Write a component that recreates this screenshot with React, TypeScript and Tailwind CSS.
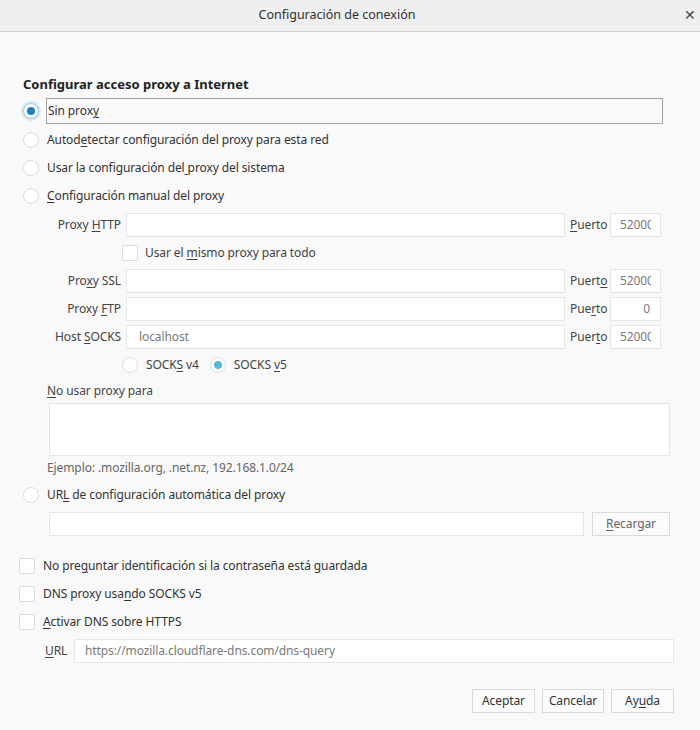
import type { ReactNode } from "react";

const font = { fontFamily: '"Noto Sans", "Open Sans", sans-serif' };

function Key({ text, at }: { text: string; at: number }) {
  if (at < 0) return <>{text}</>;
  return (
    <>
      {text.slice(0, at)}
      <span className="underline decoration-1 underline-offset-2">{text[at]}</span>
      {text.slice(at + 1)}
    </>
  );
}

function Radio({ checked = false, dim = false }: { checked?: boolean; dim?: boolean }) {
  return (
    <span
      className={`flex h-4 w-4 shrink-0 items-center justify-center rounded-full border bg-white ${
        checked && !dim ? "border-[#9cc9e8] shadow-[0_0_0_2px_#d7eaf7]" : "border-[#dedede]"
      }`}
    >
      {checked ? (
        <span className={`h-2 w-2 rounded-full ${dim ? "bg-[#5ab8dd]" : "bg-[#1a7fc1]"}`} />
      ) : null}
    </span>
  );
}

function Check() {
  return <span className="h-4 w-4 shrink-0 rounded-[2px] border border-[#dcdcdc] bg-white" />;
}

function Field({ className = "", children }: { className?: string; children?: ReactNode }) {
  return (
    <div
      className={`flex h-6 items-center overflow-hidden whitespace-nowrap border border-[#e6e6e6] bg-white text-[#7a7a7a] ${className}`}
    >
      {children}
    </div>
  );
}

function Port({ value }: { value: string }) {
  return (
    <Field className="w-[51px]">
      {value === "0" ? (
        <span className="w-full pr-[10px] text-right">0</span>
      ) : (
        <span className="ml-[9px] w-[31px] overflow-hidden">{value}</span>
      )}
    </Field>
  );
}

function ProxyRow({ label, at, host, port, portAt }: { label: string; at: number; host?: string; port: string; portAt: number }) {
  return (
    <div className="flex h-7 items-center text-[#444]">
      <span className="w-[98px] text-right">
        <Key text={label} at={at} />
      </span>
      <Field className="ml-[5px] w-[439px] pl-[12px]">{host}</Field>
      <span className="ml-[5px] w-[40px]">
        <Key text="Puerto" at={portAt} />
      </span>
      <Port value={port} />
    </div>
  );
}

function Button({ children, className = "" }: { children: ReactNode; className?: string }) {
  return (
    <button
      type="button"
      className={`flex h-6 items-center justify-center border border-[#dadada] bg-[#fbfbfb] text-[12px] text-[#333] ${className}`}
    >
      {children}
    </button>
  );
}

export default function App() {
  return (
    <div
      className="h-[730px] w-[700px] overflow-hidden bg-[#f9f9f9] text-[12px] tracking-[-0.1px] text-[#333]"
      style={font}
    >
      <div className="relative flex h-8 items-center justify-center border-b border-[#cfcfcf] bg-[#efefef] pr-[26px] text-[12.5px] tracking-normal text-[#2f2f2f]">
        Configuración de conexión
        <span className="absolute right-[4px] top-[8px] text-[14px] leading-none text-[#444]">✕</span>
      </div>

      <div className="flex flex-col pl-[23px] pr-[26px] pt-[41px]">
        <div className="flex h-[24px] items-center text-[13px] font-bold tracking-normal text-[#222]">
          Configurar acceso proxy a Internet
        </div>

        <div className="flex h-7 items-center gap-[7px]">
          <Radio checked />
          <span className="flex h-[26px] w-[617px] items-center border border-[#a0a0a0] pl-[1px]">
            <Key text="Sin proxy" at={8} />
          </span>
        </div>
        <div className="mt-[1px] flex h-7 items-center gap-[8px]">
          <Radio />
          <span>
            <Key text="Autodetectar configuración del proxy para esta red" at={5} />
          </span>
        </div>
        <div className="flex h-7 items-center gap-[8px]">
          <Radio />
          <span>
            <Key text="Usar la configuración del proxy del sistema" at={25} />
          </span>
        </div>
        <div className="flex h-7 items-center gap-[8px]">
          <Radio />
          <span>
            <Key text="Configuración manual del proxy" at={0} />
          </span>
        </div>

        <div className="mt-px">
          <ProxyRow label="Proxy HTTP" at={6} port="52000" portAt={0} />
        </div>
        <div className="flex h-7 items-center gap-[7px] pl-[99px] text-[#444]">
          <Check />
          <span>
            <Key text="Usar el mismo proxy para todo" at={8} />
          </span>
        </div>
        <ProxyRow label="Proxy SSL" at={3} port="52000" portAt={5} />
        <ProxyRow label="Proxy FTP" at={6} port="0" portAt={3} />
        <ProxyRow label="Host SOCKS" at={5} host="localhost" port="52000" portAt={4} />

        <div className="flex h-7 items-center pl-[99px] text-[#444]">
          <Radio />
          <span className="ml-[8px]">
            <Key text="SOCKS v4" at={4} />
          </span>
          <span className="ml-[11px]">
            <Radio checked dim />
          </span>
          <span className="ml-[8px]">
            <Key text="SOCKS v5" at={6} />
          </span>
        </div>

        <div className="flex h-6 items-center pl-[24px] text-[#444]">
          <Key text="No usar proxy para" at={0} />
        </div>
        <div className="ml-[26px] h-[53px] w-[621px] border border-[#e6e6e6] bg-white" />
        <div className="mt-px flex h-[22px] items-center pl-[24px] text-[#666]">
          Ejemplo: .mozilla.org, .net.nz, 192.168.1.0/24
        </div>

        <div className="mt-[2px] flex h-7 items-center gap-[8px]">
          <Radio />
          <span>
            <Key text="URL de configuración automática del proxy" at={2} />
          </span>
        </div>
        <div className="mt-[3px] flex items-center gap-[8px] pl-[26px]">
          <Field className="w-[535px]" />
          <Button className="w-[78px] text-[#666]">
            <Key text="Recargar" at={0} />
          </Button>
        </div>

        <div className="mt-[16px] flex h-7 items-center gap-[8px] -ml-1">
          <Check />
          <span>
            <Key text="No preguntar identificación si la contraseña está guardada" at={6} />
          </span>
        </div>
        <div className="flex h-7 items-center gap-[8px] -ml-1">
          <Check />
          <span>
            <Key text="DNS proxy usando SOCKS v5" at={13} />
          </span>
        </div>
        <div className="flex h-7 items-center gap-[8px] -ml-1">
          <Check />
          <span>
            <Key text="Activar DNS sobre HTTPS" at={0} />
          </span>
        </div>
        <div className="mt-px flex h-7 items-center pl-[22px]">
          <span className="w-[29px] text-[#444]">
            <Key text="URL" at={0} />
          </span>
          <Field className="w-[600px] pl-[10px]">https://mozilla.cloudflare-dns.com/dns-query</Field>
        </div>

        <div className="mt-[24px] flex justify-end gap-[7px]">
          <Button className="w-[63px]">Aceptar</Button>
          <Button className="w-[62px]">Cancelar</Button>
          <Button className="w-[63px]">
            <Key text="Ayuda" at={2} />
          </Button>
        </div>
      </div>
    </div>
  );
}
